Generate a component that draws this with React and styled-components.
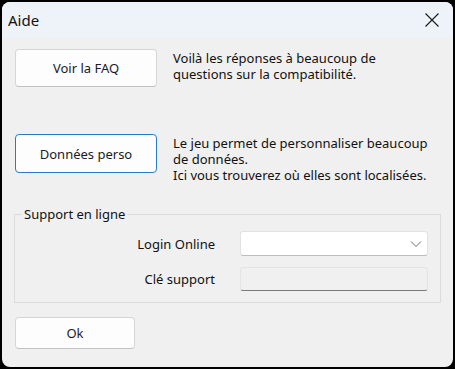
import React from "react"
import styled, { createGlobalStyle } from "styled-components"

const Global = createGlobalStyle`
  html, body {
    margin: 0;
    padding: 0;
    background: #000;
  }
  #root {
    width: 455px;
    height: 369px;
    background: #000;
    overflow: hidden;
  }
`

export default function App() {
  return (
    <>
      <Global />
      <Window>
        <TitleBar>
          <Title>Aide</Title>
          <CloseButton aria-label="Fermer">
            <svg width="16" height="16" viewBox="0 0 16 16">
              <path d="M1.5 1.5 L14.5 14.5 M14.5 1.5 L1.5 14.5" stroke="#1a1a1a" strokeWidth="1.1" fill="none" />
            </svg>
          </CloseButton>
        </TitleBar>

        <Body>
          <Row>
            <Button>Voir la FAQ</Button>
            <Desc>
              <Line>Voilà les réponses à beaucoup de</Line>
              <Line>questions sur la compatibilité.</Line>
            </Desc>
          </Row>

          <Row $top={47}>
            <Button $focused $height={39}>Données perso</Button>
            <Desc>
              <Line>Le jeu permet de personnaliser beaucoup</Line>
              <Line>de données.</Line>
              <Line>Ici vous trouverez où elles sont localisées.</Line>
            </Desc>
          </Row>

          <Group>
            <Legend>Support en ligne</Legend>
            <FieldRow>
              <FieldLabel>Login Online</FieldLabel>
              <Combo>
                <svg width="12" height="8" viewBox="0 0 12 8">
                  <path d="M1 1.5 L6 6.5 L11 1.5" stroke="#6a6a6a" strokeWidth="1" fill="none" />
                </svg>
              </Combo>
            </FieldRow>
            <FieldRow>
              <FieldLabel>Clé support</FieldLabel>
              <TextBox />
            </FieldRow>
          </Group>

          <Footer>
            <Button $width={120} $height={32}>Ok</Button>
          </Footer>
        </Body>
      </Window>
    </>
  )
}

const Window = styled.div`
  margin: 2px 0 0 2px;
  width: 451px;
  height: 365px;
  border-radius: 8px;
  overflow: hidden;
  background: #f0f0f0;
  display: flex;
  flex-direction: column;
  font-family: "Noto Sans", "Liberation Sans", sans-serif;
  color: #111;
`

const TitleBar = styled.div`
  height: 36px;
  flex: none;
  background: #eef2f9;
  display: flex;
  align-items: center;
  justify-content: space-between;
  padding: 0 10px 0 6px;
`

const Title = styled.span`
  font-size: 15px;
  color: #111;
`

const CloseButton = styled.div`
  width: 16px;
  height: 16px;
  display: flex;
  margin-right: 3px;
`

const Body = styled.div`
  flex: 1;
  padding: 11px 12px 0 13px;
`

const Row = styled.div`
  display: flex;
  align-items: flex-start;
  gap: 16px;
  margin-top: ${(p) => p.$top || 0}px;
`

const Button = styled.div`
  box-sizing: border-box;
  width: ${(p) => p.$width || 142}px;
  height: ${(p) => p.$height || 38}px;
  flex: none;
  display: flex;
  align-items: center;
  justify-content: center;
  background: #fdfdfd;
  border: 1px solid ${(p) => (p.$focused ? "#2a78c8" : "#d6d6d6")};
  border-bottom-color: ${(p) => (p.$focused ? "#2a78c8" : "#c2c2c2")};
  border-radius: 4px;
  font-size: 13px;
  color: #1a1a2a;
`

const Desc = styled.div`
  font-size: 13px;
  padding-top: 1px;
`

const Line = styled.div`
  height: 16px;
  line-height: 16px;
  white-space: nowrap;
`

const Group = styled.fieldset`
  margin: 22px 0 0 -1px;
  padding: 8px 12px 11px 0;
  border: 1px solid #dcdcdc;
  border-radius: 0;
  display: flex;
  flex-direction: column;
  gap: 11px;
`

const Legend = styled.legend`
  font-size: 13px;
  padding: 0 2px;
  margin-left: 7px;
`

const FieldRow = styled.div`
  display: grid;
  grid-template-columns: 200px 188px;
  column-gap: 25px;
  align-items: center;
`

const FieldLabel = styled.span`
  font-size: 13px;
  text-align: right;
`

const Combo = styled.div`
  box-sizing: border-box;
  height: 25px;
  background: #fff;
  border: 1px solid #e2e2e2;
  border-bottom-color: #bdbdbd;
  border-radius: 3px;
  display: flex;
  align-items: center;
  justify-content: flex-end;
  padding-right: 5px;
`

const TextBox = styled.div`
  box-sizing: border-box;
  height: 24px;
  background: #f0f0f0;
  border: 1px solid #e4e4e4;
  border-bottom: 1px solid #7a7a7a;
  border-radius: 3px;
`

const Footer = styled.div`
  margin-top: 14px;
`
